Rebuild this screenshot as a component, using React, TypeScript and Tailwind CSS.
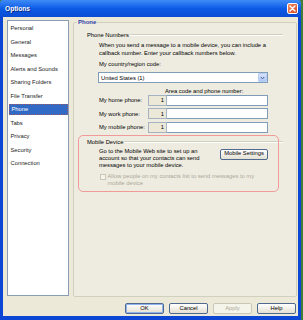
import React from "react";

const NAV = [
  "Personal",
  "General",
  "Messages",
  "Alerts and Sounds",
  "Sharing Folders",
  "File Transfer",
  "Phone",
  "Tabs",
  "Privacy",
  "Security",
  "Connection",
];

const PHONES = ["My home phone:", "My work phone:", "My mobile phone:"];

function SectionHeader({ title }: { title: string }) {
  return (
    <div className="flex items-center h-[8px]">
      <span className="pr-[1px] whitespace-nowrap">{title}</span>
      <div className="flex-1 h-[2px] border-t border-t-[#D0D0BF] border-b border-b-white" />
    </div>
  );
}

function XpButton({
  label,
  focused,
  disabled,
  className = "",
}: {
  label: string;
  focused?: boolean;
  disabled?: boolean;
  className?: string;
}) {
  return (
    <button
      disabled={disabled}
      className={`h-[11px] flex items-center justify-center rounded-[2px] border leading-none ${
        disabled
          ? "border-[#C9C7BA] bg-[#F5F4EA] text-[#ACA899]"
          : "border-[#4F6A8E] bg-gradient-to-b from-white to-[#E3E0D2] text-black"
      } ${focused ? "shadow-[inset_0_0_0_1px_#8FB2EE]" : ""} ${className}`}
    >
      {label}
    </button>
  );
}

export default function App() {
  return (
    <div className="w-[303px] h-[320px] bg-[#3f7d3a] font-['Liberation_Sans',Arial,sans-serif] text-[5.8px] leading-[8px] text-black overflow-hidden">
      <div className="w-[301px] h-[320px] flex flex-col">
        {/* Title bar */}
        <div className="h-[17px] flex items-center justify-between pl-[5px] pr-[3px] bg-gradient-to-b from-[#3E8BF6] via-[#0C5BE6] to-[#0A4CD4] rounded-t-[3px]">
          <span className="text-white font-bold text-[6.6px] [text-shadow:1px_1px_0_#0a2a7a]">
            Options
          </span>
          <div className="w-[11px] h-[11px] rounded-[2px] border border-white bg-gradient-to-br from-[#F08A5D] to-[#D44520] flex items-center justify-center">
            <svg width="7" height="7" viewBox="0 0 7 7">
              <path d="M1 1 L6 6 M6 1 L1 6" stroke="white" strokeWidth="1.4" strokeLinecap="round" />
            </svg>
          </div>
        </div>

        {/* Body */}
        <div className="flex-1 flex flex-col bg-[#ECE9D8] border-l-[3px] border-r-[3px] border-b-[4px] border-[#0B47D4]">
          <div className="flex gap-[4px] pl-[4px]">
            {/* Category list */}
            <div className="mt-[3px] w-[62px] h-[276px] bg-white border border-[#8A9DB5] pt-[1.5px] px-[0.5px] flex flex-col gap-[2.5px]">
              {NAV.map((item) => {
                const active = item === "Phone";
                return (
                  <div
                    key={item}
                    className={`h-[11px] flex items-center pl-[2px] whitespace-nowrap ${
                      active
                        ? "bg-[#316AC5] text-white border border-dotted border-[#9a5a6a]"
                        : "text-[#222]"
                    }`}
                  >
                    {item}
                  </div>
                );
              })}
            </div>

            {/* Phone page */}
            <fieldset className="mt-[1px] w-[224px] h-[279px] border border-[#D0D0BF] rounded-[2px] bg-[#EEECE0]">
              <legend className="ml-[3px] px-[1px] font-bold text-[6px] text-[#2D40A9]">Phone</legend>
              <div className="px-[13px] pt-[5px]">
                <SectionHeader title="Phone Numbers" />
                <div className="pl-[12px] pr-[15px]">
                  <div className="mt-[1.5px]">
                    <div>When you send a message to a mobile device, you can include a</div>
                    <div>callback number. Enter your callback numbers below.</div>
                  </div>
                  <div className="mt-[3px]">My country/region code:</div>
                  <div className="mt-[4.5px] -ml-[1px] h-[11px] flex items-center bg-white border border-[#7F9DB9]">
                    <span className="flex-1 pl-[2px]">United States (1)</span>
                    <div className="w-[9px] h-[9px] mr-[0.5px] rounded-[1px] border border-[#B9CEF5] bg-gradient-to-b from-[#D6E3FC] to-[#AFC6F4] flex items-center justify-center">
                      <svg width="5" height="4" viewBox="0 0 5 4">
                        <path d="M0.8 1 L2.5 2.8 L4.2 1" stroke="#4D6185" strokeWidth="1" fill="none" />
                      </svg>
                    </div>
                  </div>
                  <div className="mt-[3.7px] pl-[66px] whitespace-nowrap">Area code and phone number:</div>
                  <div className="flex flex-col gap-[2.5px]">
                    {PHONES.map((p) => (
                      <div key={p} className="h-[11px] flex items-center">
                        <span className="w-[49px] whitespace-nowrap">{p}</span>
                        <div className="w-[19px] h-[11px] border border-[#A5B2C2] bg-[#ECE9D8] flex items-center justify-end pr-[2px]">
                          1
                        </div>
                        <div className="flex-1 h-[11px] bg-white border border-[#7F9DB9] border-l-0" />
                      </div>
                    ))}
                  </div>
                </div>

                {/* Mobile device */}
                <div className="relative mt-[5px]">
                  <SectionHeader title="Mobile Device" />
                  <div className="pl-[12px] pr-[15px] leading-[7px]">
                    <div className="flex justify-between items-start mt-[2px]">
                      <div>
                        <div>Go to the Mobile Web site to set up an</div>
                        <div>account so that your contacts can send</div>
                        <div>messages to your mobile device.</div>
                      </div>
                      <XpButton label="Mobile Settings" className="w-[48px] h-[10px] mt-[1px]" />
                    </div>
                    <div className="flex items-start gap-[1.5px] mt-[4.5px] pl-[1px] text-[#ACA899]">
                      <div className="w-[6px] h-[6px] mt-[0.5px] border border-[#C9C7BA] bg-[#F5F4EA]" />
                      <div>
                        <div>Allow people on my contacts list to send messages to my</div>
                        <div>mobile device</div>
                      </div>
                    </div>
                  </div>
                  <div className="absolute -top-[3px] -left-[9px] right-[4px] -bottom-[5px] border border-[#F09A9A] rounded-[5px] pointer-events-none" />
                </div>
              </div>
            </fieldset>
          </div>

          {/* Dialog buttons */}
          <div className="mt-[6px] flex justify-end gap-[5px] pr-[2px]">
            <XpButton label="OK" focused className="w-[39px]" />
            <XpButton label="Cancel" className="w-[39px]" />
            <XpButton label="Apply" disabled className="w-[39px]" />
            <XpButton label="Help" className="w-[39px]" />
          </div>
        </div>
      </div>
    </div>
  );
}
